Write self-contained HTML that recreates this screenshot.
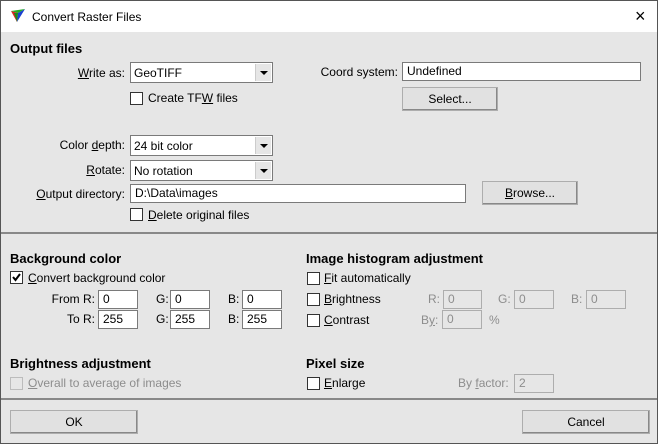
<!DOCTYPE html>
<html><head><style>
*{box-sizing:border-box;margin:0;padding:0}
body{width:658px;height:444px;overflow:hidden;font-family:"Liberation Sans",sans-serif;font-size:12px;color:#000;background:#e6e6e6}
#win{position:absolute;left:0;top:0;width:658px;height:444px;border:1px solid #555;background:#e6e6e6}
#title{position:absolute;left:0;top:0;width:656px;height:31px;background:#fff}
.a{position:absolute;white-space:nowrap;line-height:14px}
.b{font-weight:bold;font-size:13px}
.r{text-align:right}
.in{position:absolute;background:#fff;border:1px solid #7a7a7a;height:19px;padding:1px 4px;line-height:15px}
.dis{background:#e6e6e6;border-color:#adadad;color:#8d8d8d}
.g{color:#8d8d8d}
.cb{position:absolute;width:13px;height:13px;background:#fff;border:1px solid #333}
.cb.d{background:#e6e6e6;border-color:#bcbcbc}
.combo{position:absolute;height:21px;background:#fff;border:1px solid #7a7a7a;padding:3px 3px;line-height:14px}
.combo .arr{position:absolute;right:1px;top:1px;width:16px;height:17px;background:#e6e6e6;border-left:1px solid #ccc}
.combo .arr:after{content:"";position:absolute;left:4px;top:7px;border-left:4px solid transparent;border-right:4px solid transparent;border-top:4px solid #000}
.btn{position:absolute;height:24px;background:#e1e1e1;border:1px solid #adadad;box-shadow:inset -1px -1px 0 #888;text-align:center;line-height:22px}
.sep{position:absolute;left:0;width:656px;height:2px;background:#888}
u{text-decoration:underline}
</style></head><body>
<div id="win">
<div id="title">
<svg style="position:absolute;left:10px;top:8px" width="14" height="14" viewBox="0 0 14 14"><polygon points="0,2 7,4 6,13" fill="#d22"/><polygon points="7,4 14,0 6,13" fill="#1a3fd0"/><polygon points="0,2 14,0 7,4" fill="#2a2"/><polygon points="3,4 7,4 6,13" fill="#1a8a1a"/></svg>
<div class="a" style="left:31px;top:9px">Convert Raster Files</div>
<div class="a" style="left:634px;top:6px;font-size:18px;line-height:18px">×</div>
</div>

<div class="a b" style="left:9px;top:41px">Output files</div>
<div class="a r" style="left:40px;width:84px;top:65px"><u>W</u>rite as:</div>
<div class="combo" style="left:129px;top:61px;width:143px">GeoTIFF<div class="arr"></div></div>
<div class="cb" style="left:129px;top:91px"></div>
<div class="a" style="left:147px;top:90px">Create TF<u>W</u> files</div>
<div class="a r" style="left:300px;width:97px;top:64px">Coord system:</div>
<div class="in" style="left:401px;top:61px;width:239px">Undefined</div>
<div class="btn" style="left:401px;top:86px;width:96px">Select...</div>

<div class="a r" style="left:30px;width:94px;top:137px">Color <u>d</u>epth:</div>
<div class="combo" style="left:129px;top:134px;width:143px">24 bit color<div class="arr"></div></div>
<div class="a r" style="left:30px;width:94px;top:162px"><u>R</u>otate:</div>
<div class="combo" style="left:129px;top:159px;width:143px">No rotation<div class="arr"></div></div>
<div class="a r" style="left:10px;width:114px;top:186px"><u>O</u>utput directory:</div>
<div class="in" style="left:129px;top:183px;width:336px">D:\Data\images</div>
<div class="btn" style="left:481px;top:180px;width:96px"><u>B</u>rowse...</div>
<div class="cb" style="left:129px;top:207px"></div>
<div class="a" style="left:147px;top:207px"><u>D</u>elete original files</div>

<div class="sep" style="top:231px"></div>

<div class="a b" style="left:9px;top:251px">Background color</div>
<div class="cb" style="left:9px;top:270px"><svg width="11" height="11" viewBox="0 0 11 11" style="position:absolute;left:0;top:0"><path d="M2 5 L4.5 8 L9 2" stroke="#000" stroke-width="2" fill="none"/></svg></div>
<div class="a" style="left:27px;top:270px"><u>C</u>onvert background color</div>
<div class="a r" style="left:40px;width:54px;top:291px">From R:</div>
<div class="in" style="left:97px;top:289px;width:40px">0</div>
<div class="a" style="left:155px;top:291px">G:</div>
<div class="in" style="left:169px;top:289px;width:40px">0</div>
<div class="a" style="left:227px;top:291px">B:</div>
<div class="in" style="left:241px;top:289px;width:40px">0</div>
<div class="a r" style="left:40px;width:54px;top:311px">To R:</div>
<div class="in" style="left:97px;top:309px;width:40px">255</div>
<div class="a" style="left:155px;top:311px">G:</div>
<div class="in" style="left:169px;top:309px;width:40px">255</div>
<div class="a" style="left:227px;top:311px">B:</div>
<div class="in" style="left:241px;top:309px;width:40px">255</div>

<div class="a b" style="left:9px;top:356px">Brightness adjustment</div>
<div class="cb d" style="left:9px;top:376px"></div>
<div class="a g" style="left:27px;top:375px"><u>O</u>verall to average of images</div>

<div class="a b" style="left:305px;top:251px">Image histogram adjustment</div>
<div class="cb" style="left:306px;top:271px"></div>
<div class="a" style="left:323px;top:270px"><u>F</u>it automatically</div>
<div class="cb" style="left:306px;top:292px"></div>
<div class="a" style="left:323px;top:291px"><u>B</u>rightness</div>
<div class="a g" style="left:427px;top:291px">R:</div>
<div class="in dis" style="left:442px;top:289px;width:39px">0</div>
<div class="a g" style="left:497px;top:291px">G:</div>
<div class="in dis" style="left:513px;top:289px;width:40px">0</div>
<div class="a g" style="left:570px;top:291px">B:</div>
<div class="in dis" style="left:585px;top:289px;width:40px">0</div>
<div class="cb" style="left:306px;top:313px"></div>
<div class="a" style="left:323px;top:312px"><u>C</u>ontrast</div>
<div class="a g" style="left:420px;top:312px">B<u>y</u>:</div>
<div class="in dis" style="left:441px;top:309px;width:40px">0</div>
<div class="a g" style="left:488px;top:312px">%</div>

<div class="a b" style="left:305px;top:356px">Pixel size</div>
<div class="cb" style="left:306px;top:376px"></div>
<div class="a" style="left:323px;top:375px"><u>E</u>nlarge</div>
<div class="a g" style="left:457px;top:375px">By <u>f</u>actor:</div>
<div class="in dis" style="left:513px;top:373px;width:40px">2</div>

<div class="sep" style="top:397px"></div>
<div class="btn" style="left:9px;top:409px;width:128px">OK</div>
<div class="btn" style="left:521px;top:409px;width:128px">Cancel</div>
</div>
</body></html>
